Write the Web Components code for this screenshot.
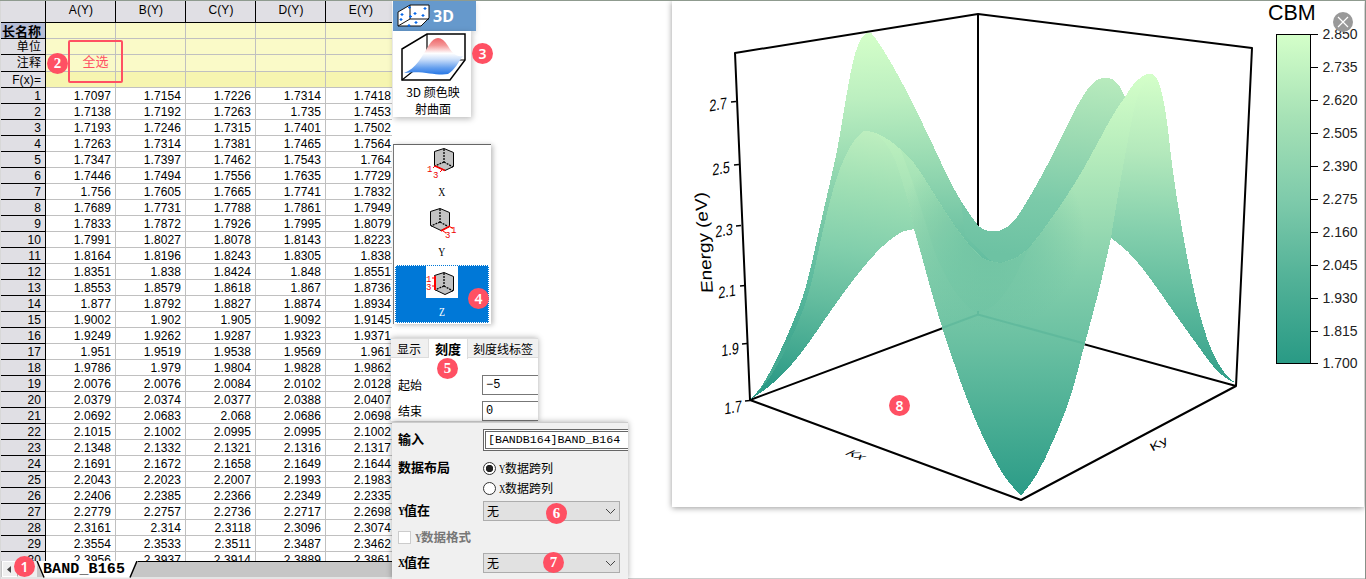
<!DOCTYPE html>
<html lang="zh">
<head>
<meta charset="utf-8">
<title>BAND_B165</title>
<style>
html,body{margin:0;height:100%;overflow:hidden;background:#fff}
body{font-family:"Liberation Sans","Noto Sans CJK SC",sans-serif;color:#000}
</style>
</head>
<body>
<app-page></app-page>
<script>
const define=(name,css,html,setup)=>customElements.define(name,class extends HTMLElement{
  connectedCallback(){
    if(this.shadowRoot)return;
    const r=this.attachShadow({mode:'open'});
    r.innerHTML=`<style>*{box-sizing:border-box}${css}</style>${typeof html==='function'?html(this):html}`;
    if(setup)setup(r,this);
  }
});

define('step-badge',`
:host{position:absolute;z-index:5;width:21px;height:21px;border-radius:50%;background:#ff5063;color:#fff;display:flex;align-items:center;justify-content:center;font:600 14px/21px "Noto Sans","Noto Sans CJK SC",sans-serif}
:host([serif]){font:bold 15px/21px "Liberation Serif",serif}`,'<slot></slot>');

/* ---------- worksheet ---------- */
const DATA=`1.7097 1.7154 1.7226 1.7314 1.7418
1.7138 1.7192 1.7263 1.735 1.7453
1.7193 1.7246 1.7315 1.7401 1.7502
1.7263 1.7314 1.7381 1.7465 1.7564
1.7347 1.7397 1.7462 1.7543 1.764
1.7446 1.7494 1.7556 1.7635 1.7729
1.756 1.7605 1.7665 1.7741 1.7832
1.7689 1.7731 1.7788 1.7861 1.7949
1.7833 1.7872 1.7926 1.7995 1.8079
1.7991 1.8027 1.8078 1.8143 1.8223
1.8164 1.8196 1.8243 1.8305 1.838
1.8351 1.838 1.8424 1.848 1.8551
1.8553 1.8579 1.8618 1.867 1.8736
1.877 1.8792 1.8827 1.8874 1.8934
1.9002 1.902 1.905 1.9092 1.9145
1.9249 1.9262 1.9287 1.9323 1.9371
1.951 1.9519 1.9538 1.9569 1.961
1.9786 1.979 1.9804 1.9828 1.9862
2.0076 2.0076 2.0084 2.0102 2.0128
2.0379 2.0374 2.0377 2.0388 2.0407
2.0692 2.0683 2.068 2.0686 2.0698
2.1015 2.1002 2.0995 2.0995 2.1002
2.1348 2.1332 2.1321 2.1316 2.1317
2.1691 2.1672 2.1658 2.1649 2.1644
2.2043 2.2023 2.2007 2.1993 2.1983
2.2406 2.2385 2.2366 2.2349 2.2335
2.2779 2.2757 2.2736 2.2717 2.2698
2.3161 2.314 2.3118 2.3096 2.3074
2.3554 2.3533 2.3511 2.3487 2.3462
2.3956 2.3937 2.3914 2.3889 2.3861`.split('\n').map(l=>l.split(' '));

define('sheet-row',`
:host{display:grid;grid-template-columns:46px repeat(5,70px);height:16px;font:12px/17px "Liberation Sans","Noto Sans CJK SC",sans-serif;letter-spacing:.1px;flex:none}
div{border-bottom:1px solid #c0c0c0;border-right:1px solid #c0c0c0;text-align:right;padding-right:4px;white-space:nowrap;overflow:hidden;height:100%}
div:first-of-type{background:#e0dfe4;border-color:#000}
:host([kind=head]){height:22px;line-height:19px}
:host([kind=head]) div{background:#e0dfe4;border-color:#000;text-align:center;padding:0 0 0 1px}
:host([kind=note]) div:not(:first-of-type){background:#fafac8}
:host([kind=note]) div:first-of-type{line-height:17px}
:host([tall]){height:17px}
:host([fx]) div:not(:first-of-type){background:#f6f5b0 !important}
:host([strong]) div:first-of-type{background:#b6bdd6;font-weight:bold;font-size:13px;letter-spacing:0}`,
el=>`<div>${el.getAttribute('label')||''}</div>`+(el.getAttribute('cells')||',,,,').split(',').map(c=>`<div>${c}</div>`).join(''));

define('sheet-tabs',`
:host{display:flex;height:18px;background:#c6c6c6;border-bottom:2px solid #e4e4e4;position:relative}
i{display:block;width:16px;height:16px;background:#efefef;border:1px solid #fff;border-right-color:#aaa;margin-left:1px}
i svg{display:block}
b{display:block;width:19px;background:#efefef}
.tab{position:relative;width:102px;height:17px;margin-left:-1px;font:bold 15px/18px "Liberation Mono",monospace;padding-left:7px}
.tab svg{position:absolute;inset:0}.tab span{position:relative;letter-spacing:.12px}
.rest{flex:1;border-top:1px solid #000}`,
`<i><svg width="14" height="14"><path d="M8 4v7L4 7.500z" fill="#444"/></svg></i><b></b>
<div class="tab"><svg width="102" height="17"><path d="M0 0l7 16.500h87L101 0z" fill="#fff"/><path d="M1 0l7 16.500M101 0l-7 16.500" fill="none" stroke="#000" stroke-width="1.500"/></svg><span>BAND_B165</span></div><div class="rest"></div>
<step-badge style="left:13px;top:-5px">1</step-badge>`);

define('data-sheet',`
:host{display:flex;flex-direction:column;width:392px;height:578px;overflow:hidden;position:relative;border-left:1px solid #d8d8d8}
.rows{height:560px;overflow:hidden;display:flex;flex-direction:column;width:396px;margin-left:-1px}
.pick{position:absolute;left:67px;top:39px;width:55px;height:43px;border:2px solid #ff5063;border-radius:2px;font:13px/38px "Noto Sans CJK SC",sans-serif;color:#ff5063;text-align:center}`,
`<div class="rows">
<sheet-row kind="head" cells="A(Y),B(Y),C(Y),D(Y),E(Y)"></sheet-row>
<sheet-row kind="note" strong label="长名称"></sheet-row>
<sheet-row kind="note" label="单位"></sheet-row>
<sheet-row kind="note" tall label="注释"></sheet-row>
<sheet-row kind="note" fx label="F(x)="></sheet-row>
${DATA.map((r,i)=>`<sheet-row label="${i+1}" cells="${r.join()}"></sheet-row>`).join('')}
</div><sheet-tabs></sheet-tabs><div class="pick">全选</div><step-badge serif style="left:46px;top:52px">2</step-badge>`);

/* ---------- tool column ---------- */
define('plot-type',`
:host{display:block;width:83px;position:relative}
.h{height:30px;background:#6699cc;color:#fff;font:bold 16px/30px "Noto Sans",sans-serif;display:flex;align-items:center;gap:3px;padding-left:4px;box-shadow:0 2px 5px #0002}
.c{position:relative;width:78px;height:86px;background:#fff;box-shadow:1px 2px 6px #0004;font:12px/17px "Noto Sans CJK SC",sans-serif;text-align:center}
.c svg{display:block}.c p{margin:1px 4px 0 6px}`,
`<div class="h"><svg width="33" height="26" viewBox="0 0 33 26"><path d="M1 9 13 2h19v13l-8 8H1z" fill="#fff" stroke="#111"/><path d="M13 2v14h19M13 16 1 23" fill="none" stroke="#111"/><path d="M5 10v3M3.500 11.500h3M4 15v3M2.500 16.500h3M18 9v3M16.500 10.500h3M28 4v3M26.500 5.500h3M26 11v3M24.500 12.500h3M19 18v3M17.500 19.500h3M12 21v3M10.500 22.500h3M12.500 3v3M11 4.500h3M13.500 12v3M12 13.500h3" stroke="#0868e8" stroke-width="1.200"/></svg>3D</div>
<div class="c"><svg width="78" height="51" viewBox="0 0 78 51"><defs><linearGradient id="g" x2="0" y2="1"><stop stop-color="#ee6468"/><stop offset=".2" stop-color="#f49696"/><stop offset=".42" stop-color="#fff"/><stop offset=".58" stop-color="#cfe1fa"/><stop offset=".82" stop-color="#659fee"/><stop offset="1" stop-color="#2878e5"/></linearGradient></defs><path d="M9 18 34 3h38v26L57 49H9z" fill="#fff" stroke="#000" stroke-width="1.500"/><path d="M34 3v26h38M34 29 9 49" fill="none" stroke="#000" stroke-width="1.200"/><path d="M11 42C23 38 29 25 36 14c6-10 13-9 19 1 4 7 8 11 15 10-4 5-8 14-15 18-13 2-25-4-44-1z" fill="url(#g)"/></svg><p>3D 颜色映<br>射曲面</p></div>
<step-badge style="left:79px;top:42px">3</step-badge>`);

const cube=(x,y)=>`<path transform="translate(${x} ${y})" d="M10 .5 19.500 4.500v14L11 22.500.500 17.500v-14z" fill="#c2c2c2" stroke="#000"/><path transform="translate(${x} ${y})" d="M.5 4 10 8l9.500-3.500" stroke="#000" stroke-opacity="0" fill="none"/><path transform="translate(${x} ${y})" d="M10 1v13M10 14 1 18M10 14l9 5" stroke="#000" fill="none" stroke-width="1.300" stroke-dasharray="2 1"/>`;
define('axis-item',`
:host{display:flex;flex-direction:column;align-items:center;height:60px;position:relative;font:13px/12px "Liberation Serif",serif}
svg{display:block}text{font:9px "Liberation Mono",monospace;fill:#e00}
.k{line-height:14px;margin-top:4px;transform:scaleX(.75)}
:host([on]){background:#0078d7;color:#fff;height:58px;outline:1px dotted #fff;outline-offset:-1px}
:host([on]) svg{background:#fff;margin-top:1px}:host([on]) .k{margin-top:7px}`,
el=>{const k=el.getAttribute('axis');
const art={X:cube(8,3)+'<path d="M9 21l10 4.500" stroke="#f00" stroke-width="1.500"/><path d="M7 23l2-2M14 27l2-2" stroke="#f00"/><text x="1" y="27">1</text><text x="7" y="33">3</text>',
Y:cube(4,3)+'<path d="M15 26l9-5" stroke="#f00" stroke-width="1.500"/><path d="M24 22l3 1M17 26l3 2" stroke="#f00"/><text x="25" y="28">1</text><text x="19" y="33">3</text>',
Z:cube(8,6)+'<path d="M9 10v14" stroke="#f00" stroke-width="2"/><path d="M6 12h3M6 20h3" stroke="#f00"/><text x="0" y="16">1</text><text x="0" y="24">3</text>'}[k];
return `<svg width="32" height="${k==='Z'?32:36}">${art}</svg><div class="k">${k}</div>`});

define('axis-list',`
:host{display:block;position:relative;width:98px;height:180px;margin-top:27px;border-top:1px solid #666;border-left:1px solid #777;background:#fff;box-shadow:2px 1px 5px #0004}
div{padding:0 2px 0 1px}`,
`<div><axis-item axis="X"></axis-item><axis-item axis="Y"></axis-item><axis-item axis="Z" on></axis-item></div><step-badge style="left:74px;top:143px">4</step-badge>`);

define('scale-panel',`
:host{display:block;position:relative;width:147px;height:84px;margin:14px 0 0 -2px;background:#fff;box-shadow:0 0 6px #0005;overflow:visible;font:12px/19px "Noto Sans CJK SC",sans-serif}
.tabs{display:flex;height:20px;background:#f0f0f0;border-bottom:1px solid #ddd}
.tabs div{padding:0 6px;white-space:nowrap;line-height:19px;border-right:1px solid #ddd;border-top:1px solid #ddd}
.tabs .on{font-weight:bold;background:#fff;height:21px;width:39px;font-size:13px;padding:0 6px}
.tabs div:first-child{width:38px}.tabs div:last-child{padding:0 5px;flex:1;border-right:0}
.r{display:flex;padding-left:7px;height:20px;margin-top:6px;justify-content:space-between}
.tabs + .r{margin-top:17px}.r div{width:56px;height:20px;border:1px solid #777;border-right:0;padding-left:3px;font:12px/18px "Liberation Mono",monospace}`,
`<div class="tabs"><div>显示</div><div class="on">刻度</div><div>刻度线标签</div></div>
<div class="r"><span>起始</span><div>−5</div></div><div class="r"><span>结束</span><div>0</div></div>
<step-badge serif style="left:46px;top:20px">5</step-badge>`);

define('param-panel',`
:host{display:block;position:relative;width:236px;height:157px;margin:1px 0 0 -1px;background:#f0f0f0;box-shadow:0 0 6px #0005;border-top:1px solid #ccc;z-index:2;font:12px/20px "Noto Sans CJK SC",sans-serif;padding:6px 0 0 6px}
.g{display:grid;grid-template-columns:85px 1fr;grid-template-rows:22px 7px 20px 20px 3px 20px 6px 20px 6px 20px;align-items:center}
b{font-size:13px;line-height:18px;white-space:nowrap;padding-bottom:2px}
em{font:inherit;font-family:"Liberation Serif",serif;display:inline-block;width:6px;transform:scaleX(.75);transform-origin:0 50%}
.in{border:3px double #666;border-right:0;background:#fff;height:22px;line-height:16px;font-family:"Liberation Mono",monospace;font-size:11.600px;padding-left:2px;white-space:nowrap;overflow:hidden}
.ra{display:flex;align-items:center;gap:3px;white-space:nowrap}
.ra i{width:13px;height:13px;border:1px solid #333;border-radius:50%;background:#fff}
.ra.on i{background:radial-gradient(#222 0 3.400px,#fff 4px)}
.sel{width:137px;height:20px;background:#e1e1e1;border:1px solid #adadad;display:flex;justify-content:space-between;align-items:center;padding:0 3px}
.ck{grid-column:1/3;display:flex;align-items:center;gap:4px;color:#777}.ck i{width:13px;height:13px;border:1px solid #ccc;background:#fff}
.sp{grid-column:1/3}.ck b{padding:0;font-size:12.500px}`,
`<div class="g"><b>输入</b><div class="in">[BANDB164]BAND_B164</div><span class="sp"></span>
<b>数据布局</b><div class="ra on"><i></i><span><em>Y</em>数据跨列</span></div><span></span><div class="ra"><i></i><span><em>X</em>数据跨列</span></div><span class="sp"></span>
<b><em>Y</em>值在</b><div class="sel"><span>无</span><svg width="11" height="7"><path d="M1 1l4.500 4.500L10 1" fill="none" stroke="#444"/></svg></div><span class="sp"></span>
<div class="ck"><i></i><b><em>Y</em>数据格式</b></div><span class="sp"></span>
<b><em>X</em>值在</b><div class="sel"><span>无</span><svg width="11" height="7"><path d="M1 1l4.500 4.500L10 1" fill="none" stroke="#444"/></svg></div></div>
<step-badge serif style="left:154px;top:80px">6</step-badge><step-badge serif style="left:151px;top:129px">7</step-badge>`);

define('tool-column',`:host{display:flex;flex-direction:column;width:280px;padding-left:1px;height:578px;position:relative;box-shadow:none}`,
`<plot-type></plot-type><axis-list></axis-list><scale-panel></scale-panel><param-panel></param-panel>`);

/* ---------- 3D surface plot ---------- */
const curve=(p,first)=>{let d=(first?'M':'L')+p[0];for(let i=0;i<p.length-1;i++){const a=p[i-1]||p[i],b=p[i],c=p[i+1],e=p[i+2]||c;
 d+=`C${b[0]+(c[0]-a[0])/6} ${b[1]+(c[1]-a[1])/6} ${c[0]-(e[0]-b[0])/6} ${c[1]-(e[1]-b[1])/6} ${c[0]} ${c[1]}`}return d};
const shape=(...parts)=>parts.map((p,i)=>curve(p,!i)).join('')+'Z';
const backLeft=[[751,399],[763,384],[777,358],[793,322],[806,286],[823,213],[836.500,153],[844,110],[850,76],[855,54],[860,41],[864,35],[868,33],[873,35],[887,56],[907,92],[930,139],[947,175],[961,201],[977,224]];
const backRight=[[977,224],[987,230.500],[998,231],[1007,227],[1017,217],[1033,191],[1050,160],[1067,126],[1080,101],[1093,83],[1106,77.500],[1117,83],[1125,97]];
const tallOut=[[1125,97],[1133,85],[1143,76],[1151,74],[1157,79],[1162,94],[1167,122],[1173,172],[1182,229],[1193,286],[1200,315],[1208,341],[1217,361],[1227,376],[1236,383]];
const tallLow=[[1236,383],[1226,378],[1213,366],[1193,339],[1173,311],[1157,288],[1143,269],[1127,251],[1111,238]];
const frontRight=[[1111,238],[1100,286],[1085,343],[1070,398],[1053,441],[1037,474],[1021,496]];
const frontLeft=[[1021,496],[1003,474],[983,437],[967,399],[954,363],[942,327],[931,290],[922,257],[914,229]];
const leftLow=[[914,229],[900,233],[883,246],[867,263],[848,287],[830,312],[807,345],[787,370],[767,388],[751,399]];
const ridgeL=[[751,399],[770,377],[787,347],[803,310],[813,276],[823,230],[836,180],[849,149],[860,134],[868,131],[880,135],[893,143],[914,163],[938,200],[953,223],[968,243],[983,258],[1000,263]];
const ridgeR=[[1000,263],[1017,257],[1032,244],[1048,223],[1064,200],[1081,173],[1097,144],[1113,115],[1125,97]];
const creaseL=[[914,229],[909,205],[903,184],[895,160],[886,144],[876,133]];
const creaseR=[[1151,74],[1138,95],[1130,130],[1123,167],[1115,213],[1111,238]];
const front=shape(ridgeL.slice(10),ridgeR,tallOut.slice(0,4),creaseR,frontRight,frontLeft,creaseL);
const T=[['2.850',34],['2.735',67],['2.620',100],['2.505',133],['2.390',166],['2.275',199],['2.160',232],['2.045',264.500],['1.930',297.500],['1.815',330.500],['1.700',363]];
const grad=(id,x1,y1,x2,y2,...s)=>`<linearGradient id="${id}" gradientUnits="userSpaceOnUse" x1="${x1}" y1="${y1}" x2="${x2}" y2="${y2}">${s.map(([o,c])=>`<stop offset="${o}" stop-color="${c}"/>`).join('')}</linearGradient>`;
const zt=[['2.7',718,104,734,102],['2.5',721,168,737,165],['2.3',724,230,739,226],['2.1',727,291,743,286],['1.9',730,349,745,344],['1.7',733,407,748,401]];

define('surface-plot',`
:host{display:block;position:relative;width:692px;height:506px;background:#fff;box-shadow:0 1px 6px #0006}
svg{display:block}text{font-family:"Liberation Sans",sans-serif}`,
`<svg width="692" height="506" viewBox="672 1 692 506"><defs>
${grad('bl',868,33,878,330,[0,'#d4ffc9'],[.22,'#bcefc0'],[.42,'#9bdcb3'],[.66,'#73c5a5'],[.85,'#5ab99d'],[1,'#45aa92'])}
${grad('fl',876,131,838,395,[0,'#beefbf'],[.22,'#9fdfb4'],[.45,'#82cfac'],[.65,'#65bd9f'],[1,'#2b9a86'])}
${grad('br',1106,77,1088,262,[0,'#b8ebbd'],[.35,'#9bdab2'],[.7,'#7bcaa9'],[1,'#6dc2a3'])}
${grad('tr',1152,74,1142,384,[0,'#d4ffc9'],[.25,'#b4e9bc'],[.5,'#85d0ad'],[.7,'#63bd9f'],[1,'#309e89'])}
${grad('fr',1000,74,1000,496,[0,'#d4ffc9'],[.17,'#b9eebd'],[.34,'#9cdcb3'],[.48,'#82ceab'],[.65,'#68bfa1'],[.82,'#4aae94'],[1,'#2b9b87'])}
${grad('cb',0,34,0,363,[0,'#d4ffc9'],[.25,'#a7e2b6'],[.5,'#7fcbab'],[.75,'#51b197'],[1,'#299a85'])}
<radialGradient id="valley" gradientUnits="userSpaceOnUse" cx="990" cy="235" r="95"><stop stop-color="#62bb9e" stop-opacity=".7"/><stop offset=".5" stop-color="#67bea0" stop-opacity=".42"/><stop offset="1" stop-color="#67bea0" stop-opacity="0"/></radialGradient>
<clipPath id="fc"><path d="${front}"/></clipPath></defs>
<path d="M750 400 735 53 978 14 1252 48 1236 386 1021 500ZM978 14V315M750 400 978 315 1236 386" fill="none" stroke="#000" stroke-width="2" stroke-linejoin="round"/>
<g shape-rendering="crispEdges">
<path d="${shape(backLeft.concat(backRight.slice(1,4)),[[1007,265],[978,275],[914,229]],leftLow)}" fill="url(#bl)"/>
<path d="${shape(backLeft.slice(-2).concat(backRight.slice(1)),ridgeR.slice().reverse(),[[1000,263],[990,260],[965,235]])}" fill="url(#br)"/>
<path d="${shape(tallOut,tallLow,frontRight.slice(0,2),[[1105,200],[1130,110]])}" fill="url(#tr)"/>
<path d="${shape(ridgeL.slice(0,12),creaseL.slice().reverse(),leftLow)}" fill="url(#fl)"/>
<path d="${front}" fill="url(#fr)"/></g>
<g clip-path="url(#fc)"><rect x="890" y="130" width="200" height="210" fill="url(#valley)"/>
<path d="${shape([[895,135],[912,180],[927,227],[937,257],[953,288],[967,305],[978,312],[995,304],[1010,285],[1023,260],[1033,240],[1050,200],[1075,130]])}" fill="#58b79b" opacity=".06"/>
<path d="M942 328 978 314.500 1086 344M978 311v4" fill="none" stroke="#55b397" stroke-width="2" opacity=".55"/></g>
${zt.map(([t,x,y,a,b])=>`<path d="M${a-3} ${b}L${a+2} ${b-.5}" stroke="#000" stroke-width="1.500"/><text transform="matrix(.76 -.12 -.03 1 ${x} ${y+6})" font-size="16.500" text-anchor="middle">${t}</text>`).join('')}
<text transform="translate(713 293) rotate(-94) skewX(-5)" font-size="16.500" textLength="101" lengthAdjust="spacingAndGlyphs">Energy (eV)</text>
<text transform="matrix(.86 .32 -.8 .38 844 454)" font-size="16">Kx</text>
<text transform="matrix(.86 -.46 .35 .62 1152.500 451.500)" font-size="16">Ky</text>
<rect x="1276.500" y="34.500" width="34" height="329" fill="url(#cb)" stroke="#000"/>
${T.map(([t,y])=>`<path d="M1311 ${Math.round(y)+.5}h7" stroke="#000"/><text x="1322.500" y="${y+5}" font-size="14" fill="#222">${t}</text>`).join('')}
<text x="1268" y="19.500" font-size="21.500">CBM</text>
<circle cx="1343" cy="22" r="10" fill="#999"/><path d="M1338 17l10 10M1348 17l-10 10" stroke="#fff" stroke-width="1.200"/>
</svg><step-badge style="left:217px;top:394px">8</step-badge>`);

define('app-page',`
:host{display:flex;width:1366px;height:579px;border-top:1px solid #8f9b8f;border-right:1px solid #889088;overflow:hidden;position:relative;box-sizing:border-box;background:linear-gradient(#ccc,#ccc) 0 577px/100% 1px no-repeat #fff}
data-sheet,tool-column,surface-plot{flex:none}`,
`<data-sheet></data-sheet><tool-column></tool-column><surface-plot></surface-plot>`);
</script>
</body>
</html>
